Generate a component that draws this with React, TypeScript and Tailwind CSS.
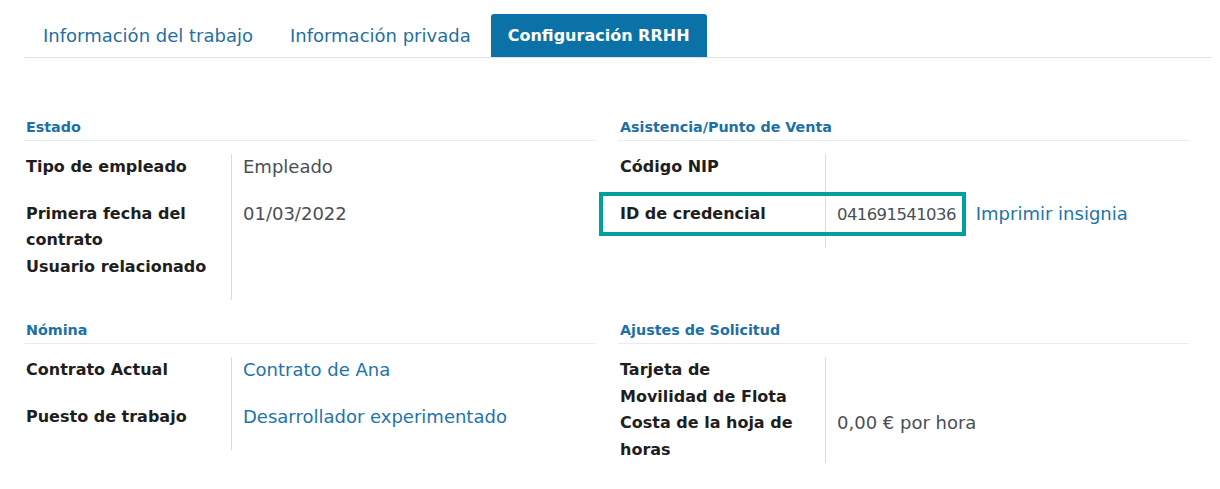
import React from "react";

const FONT = { fontFamily: '"DejaVu Sans", "Noto Sans", sans-serif' };

function Header({ children }: { children: React.ReactNode }) {
  return (
    <div className="border-b border-[#e9ecef] pb-[3px] pl-[2px] text-[14.3px] font-semibold leading-[20px] text-[#1c70a8]">
      {children}
    </div>
  );
}

type Row = {
  label: string[];
  value?: React.ReactNode;
  pb?: boolean;
  extra?: React.ReactNode;
};

function Group({ rows }: { rows: Row[] }) {
  return (
    <div className="grid grid-cols-[207px_1fr] pt-[13px]">
      {rows.map((r, i) => (
        <React.Fragment key={i}>
          <div
            className={`relative pl-[2px] text-[16px] font-bold leading-[26.5px] text-[#1e1e1e] ${
              r.pb ? "pb-[20px]" : ""
            }`}
          >
            {r.extra}
            {r.label.map((l, j) => (
              <div key={j}>{l}</div>
            ))}
          </div>
          <div
            className={`border-l border-[#dcdcdc] pl-[11px] text-[18px] leading-[26.5px] text-[#4a4f57] ${
              r.pb ? "pb-[20px]" : ""
            }`}
          >
            {r.value}
          </div>
        </React.Fragment>
      ))}
    </div>
  );
}

const link = "text-[#2273ad]";

export default function App() {
  return (
    <div className="h-[489px] w-[1220px] bg-white" style={FONT}>
      <div className="pt-[14px] pl-[24px] pr-[8px]">
        <div className="flex border-b border-[#dee2e6] pl-[2px] text-[18px] leading-[43px]">
          <div className="px-[17px] text-[#1f6fa4]">Información del trabajo</div>
          <div className="ml-[3px] px-[17px] text-[#1f6fa4]">Información privada</div>
          <div className="ml-[3px] rounded-t-[3px] bg-[#0b72a8] px-[17px] text-[16px] font-bold text-white">
            Configuración RRHH
          </div>
        </div>
      </div>

      <div className="grid grid-cols-2 gap-x-[23px] pl-[24px] pr-[31px] pt-[59px]">
        <div>
          <Header>Estado</Header>
          <Group
            rows={[
              { label: ["Tipo de empleado"], value: "Empleado", pb: true },
              { label: ["Primera fecha del", "contrato"], value: "01/03/2022" },
              { label: ["Usuario relacionado"], pb: true },
            ]}
          />
        </div>
        <div>
          <Header>Asistencia/Punto de Venta</Header>
          <Group
            rows={[
              { label: ["Código NIP"], pb: true },
              {
                label: ["ID de credencial"],
                pb: true,
                extra: (
                  <div className="absolute left-[-19px] top-[-9px] h-[44px] w-[367px] border-[4px] border-[#00a09d]" />
                ),
                value: (
                  <span>
                    <span className="text-[16.5px] tracking-[-0.6px]">041691541036</span>
                    <span className={`ml-[20px] ${link}`}>Imprimir insignia</span>
                  </span>
                ),
              },
            ]}
          />
        </div>
      </div>

      <div className="grid grid-cols-2 gap-x-[23px] pl-[24px] pr-[31px] pt-[20px]">
        <div>
          <Header>Nómina</Header>
          <Group
            rows={[
              {
                label: ["Contrato Actual"],
                value: <span className={link}>Contrato de Ana</span>,
                pb: true,
              },
              {
                label: ["Puesto de trabajo"],
                value: <span className={link}>Desarrollador experimentado</span>,
                pb: true,
              },
            ]}
          />
        </div>
        <div>
          <Header>Ajustes de Solicitud</Header>
          <Group
            rows={[
              { label: ["Tarjeta de", "Movilidad de Flota"] },
              { label: ["Costa de la hoja de", "horas"], value: "0,00 € por hora" },
            ]}
          />
        </div>
      </div>
    </div>
  );
}
